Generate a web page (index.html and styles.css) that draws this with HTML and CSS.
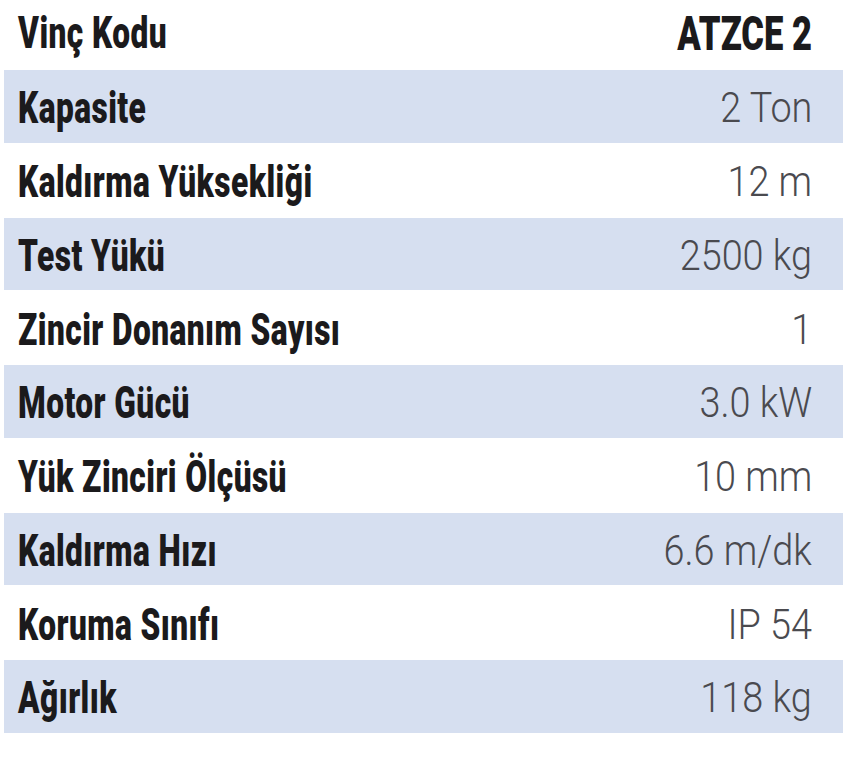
FILE: index.html
```html
<!DOCTYPE html>
<html lang="tr">
<head>
<meta charset="utf-8">
<title>Vinç Kodu ATZCE 2</title>
<link rel="stylesheet" href="styles.css">
</head>
<body>
<div class="spec">
  <div class="row head"><span class="lbl">Vinç Kodu</span><span class="val code">ATZCE 2</span></div>
  <div class="row band"><span class="lbl">Kapasite</span><span class="val">2 Ton</span></div>
  <div class="row plain"><span class="lbl">Kaldırma Yüksekliği</span><span class="val">12 m</span></div>
  <div class="row band"><span class="lbl">Test Yükü</span><span class="val">2500 kg</span></div>
  <div class="row plain"><span class="lbl">Zincir Donanım Sayısı</span><span class="val">1</span></div>
  <div class="row band"><span class="lbl">Motor Gücü</span><span class="val">3.0 kW</span></div>
  <div class="row plain"><span class="lbl">Yük Zinciri Ölçüsü</span><span class="val">10 mm</span></div>
  <div class="row band"><span class="lbl">Kaldırma Hızı</span><span class="val">6.6 m/dk</span></div>
  <div class="row plain"><span class="lbl">Koruma Sınıfı</span><span class="val">IP 54</span></div>
  <div class="row band"><span class="lbl">Ağırlık</span><span class="val">118 kg</span></div>
</div>
</body>
</html>
```
FILE: styles.css
```css
html, body {
  margin: 0;
  padding: 0;
  background: #ffffff;
}
.spec {
  margin: 0 8px 0 4px;
  display: flex;
  flex-direction: column;
}
.row {
  display: flex;
  align-items: center;
  justify-content: space-between;
  padding: 0 31px 0 14px;
}
.head { height: 70px; }
.band { height: 72.5px; background: #d6dff0; }
.plain { height: 75px; }
.lbl {
  display: inline-block;
  font-family: Roboto, "Liberation Sans", sans-serif;
  font-weight: 900;
  font-size: 44px;
  line-height: 1;
  letter-spacing: 0.6px;
  color: #1b1a1c;
  white-space: nowrap;
  transform: scaleX(0.72);
  transform-origin: left center;
  margin-top: 4px;
}
.head .lbl { margin-top: -4px; }
.val {
  display: inline-block;
  font-family: Roboto, "Liberation Sans", sans-serif;
  font-weight: 300;
  font-size: 42px;
  line-height: 1;
  color: #4a4a4f;
  white-space: nowrap;
  transform: scaleX(0.9);
  transform-origin: right center;
  margin-top: 4px;
}
.val.code {
  font-weight: 900;
  font-size: 48px;
  color: #1b1a1c;
  transform: scaleX(0.72);
  margin-top: -2px;
}
```
